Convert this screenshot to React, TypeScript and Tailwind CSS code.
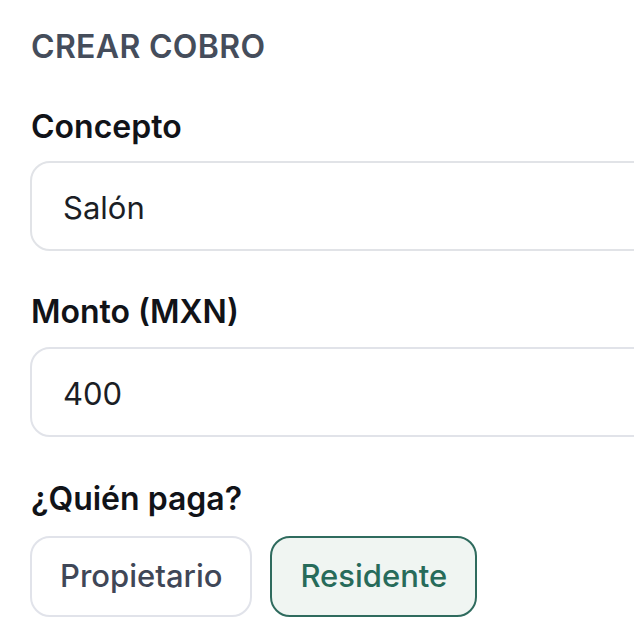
import React, { useState } from 'react';

const CrearCobro: React.FC = () => {
  const [concepto, setConcepto] = useState('Salón');
  const [monto, setMonto] = useState('400');
  const [pagador, setPagador] = useState<'propietario' | 'residente'>('residente');

  const opciones = [
    { key: 'propietario' as const, label: 'Propietario' },
    { key: 'residente' as const, label: 'Residente' },
  ];

  return (
    <div className="w-[634px] h-[634px] overflow-hidden bg-white pl-[31px] pt-[29px] font-['Inter',sans-serif]">
      <h2 className="text-[32px] leading-[36px] font-semibold tracking-[0.01em] text-[#454d5b] uppercase">
        Crear cobro
      </h2>

      {/* Concepto */}
      <div className="mt-[44px]">
        <label className="block text-[32px] leading-[36px] font-semibold text-[#111318] mb-[16px]">
          Concepto
        </label>
        <input
          type="text"
          value={concepto}
          onChange={(e) => setConcepto(e.target.value)}
          className="-ml-px w-[700px] h-[90px] rounded-[20px] border-2 border-[#e1e3e7] bg-white pl-[31px] pt-[3px] text-[31px] text-[#1b1e25] outline-none"
        />
      </div>

      {/* Monto */}
      <div className="mt-[43px]">
        <label className="block text-[32px] leading-[36px] font-semibold text-[#111318] mb-[17px]">
          Monto (MXN)
        </label>
        <input
          type="text"
          value={monto}
          onChange={(e) => setMonto(e.target.value)}
          className="-ml-px w-[700px] h-[90px] rounded-[20px] border-2 border-[#e1e3e9] bg-white pl-[31px] pt-[3px] text-[31px] text-[#1b1e25] outline-none"
        />
      </div>

      {/* Quién paga */}
      <div className="mt-[44px]">
        <label className="block text-[32px] leading-[36px] font-semibold text-[#111318] mb-[19px]">
          ¿Quién paga?
        </label>
        <div className="-ml-px flex gap-[18px]">
          {opciones.map((op) => (
            <button
              key={op.key}
              type="button"
              onClick={() => setPagador(op.key)}
              className={
                pagador === op.key
                  ? 'h-[81px] px-[28px] rounded-[20px] border-2 border-[#2f6b5e] bg-[#f0f5f2] text-[31px] font-medium text-[#276b5a]'
                  : 'h-[81px] px-[28px] rounded-[20px] border-2 border-[#e1e3ea] bg-white text-[31px] font-medium text-[#3f4757]'
              }
            >
              {op.label}
            </button>
          ))}
        </div>
      </div>
    </div>
  );
};

export default function App() {
  return <CrearCobro />;
}
